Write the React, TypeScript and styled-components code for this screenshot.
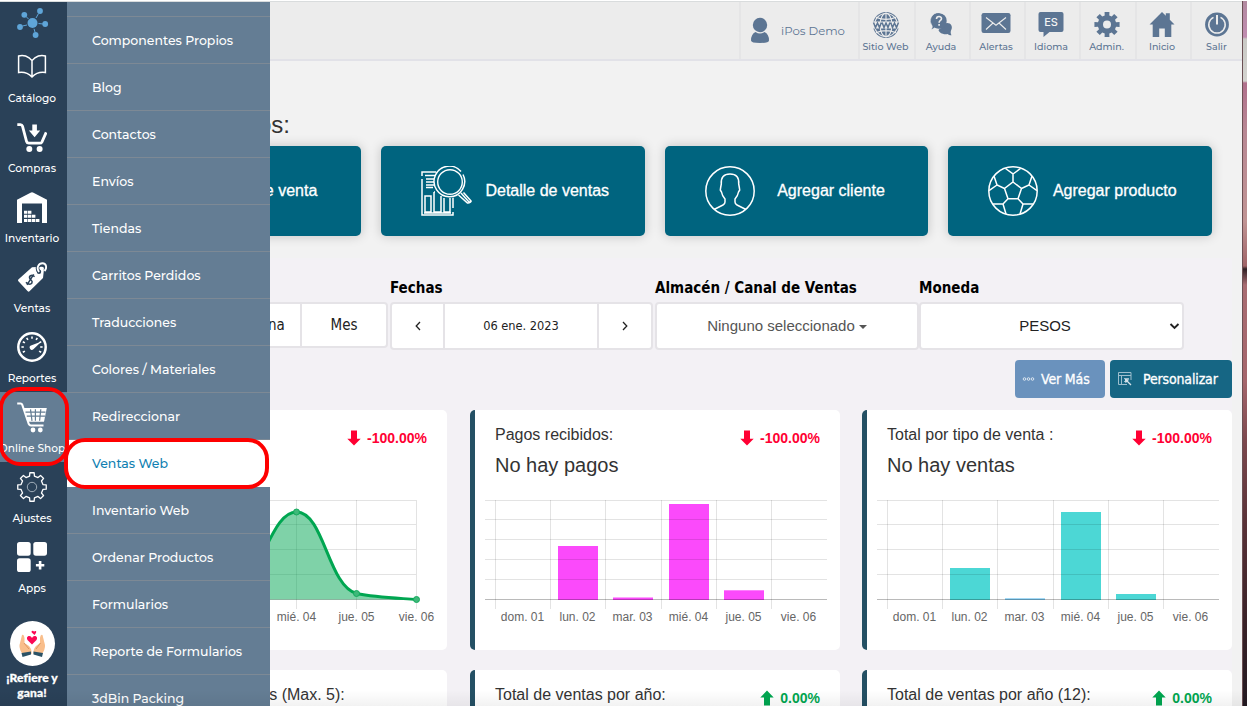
import React from 'react';
import styled, { createGlobalStyle } from 'styled-components';

const geometric = '"Montserrat", "Inter", sans-serif';
const arial = '"Liberation Sans", Arial, sans-serif';
const tahoma = '"DejaVu Sans Condensed", "DejaVu Sans", sans-serif';

const Global = createGlobalStyle`
  * { box-sizing: border-box; }
  body { margin: 0; background: #fff; overflow: hidden; font-family: ${arial}; }
`;

const Screen = styled.div`
  position: relative;
  display: flex;
  width: 1247px;
  height: 706px;
  overflow: hidden;
  border-top: 1px solid #fff;
  &::after {
    content: '';
    position: absolute;
    inset: auto 0 0 0;
    height: 16px;
    background: linear-gradient(rgba(0, 0, 0, 0), rgba(0, 0, 0, 0.05));
  }
`;

const Sidebar = styled.nav`
  width: 67px;
  flex: none;
  display: flex;
  flex-direction: column;
  background: #2a4158;
  border-top: 1px solid #d9dcdd;
`;

const Brand = styled.div`
  height: 40px;
  padding: 5px 0 0 15px;
`;

const SideItem = styled.a<{ $active?: boolean }>`
  height: 70px;
  flex: none;
  padding-top: 10px;
  padding-right: 3px;
  display: flex;
  flex-direction: column;
  align-items: center;
  overflow: hidden;
  background: ${(p) => (p.$active ? '#647d94' : 'transparent')};
`;

const SideLabel = styled.span`
  margin-top: 8px;
  font: 500 10.6px/16px ${geometric};
  color: #fff;
  white-space: nowrap;
`;

const Refer = styled.a`
  margin-top: 19px;
  padding-right: 3px;
  display: flex;
  flex-direction: column;
  align-items: center;
  font: 900 12px/15px Lato, sans-serif;
  letter-spacing: 0.1px;
  -webkit-text-stroke: 0.3px #fff;
  color: #fff;
  text-align: center;
`;

const ReferBadge = styled.span`
  width: 45px;
  height: 45px;
  margin-bottom: 4px;
  border-radius: 50%;
  background: #fff;
  display: flex;
`;

const Submenu = styled.div`
  position: absolute;
  left: 67px;
  top: 1px;
  width: 203px;
  height: 704px;
  overflow: hidden;
  background: #647d94;
`;

const SubmenuStub = styled.div`
  height: 15px;
  border-bottom: 1px solid #7d8995;
`;

const SubmenuItem = styled.a<{ $current?: boolean }>`
  display: block;
  height: 47px;
  padding-left: 25px;
  border-bottom: 1px solid ${(p) => (p.$current ? '#fff' : '#7d8995')};
  font: 500 12.5px/47px ${geometric};
  color: ${(p) => (p.$current ? '#117fb2' : '#fff')};
  background: ${(p) => (p.$current ? '#fff' : 'transparent')};
  white-space: nowrap;
`;

const Marker = styled.div<{ $x: number; $y: number; $w: number; $h: number }>`
  position: absolute;
  left: ${(p) => p.$x}px;
  top: ${(p) => p.$y}px;
  width: ${(p) => p.$w}px;
  height: ${(p) => p.$h}px;
  border: 4px solid #fe0000;
  border-radius: 21px;
`;

const Main = styled.main`
  width: 1175px;
  flex: none;
  display: flex;
  flex-direction: column;
  background: #f2f2f2;
  border-top: 1px solid #d9dcdd;
`;

const Header = styled.header`
  height: 59px;
  flex: none;
  display: flex;
  justify-content: flex-end;
  background: #ececec;
  border-bottom: 2px solid #e2e2e8;
`;

const UserBox = styled.a`
  width: 119px;
  display: flex;
  align-items: center;
  padding-left: 9px;
  border-left: 2px solid #e5e5e6;
  font: 400 11.700px/20px ${geometric};
  color: #5c7593;
`;

const UserName = styled.span`
  margin-left: 11px;
`;

const HeaderItem = styled.a<{ $width: number }>`
  width: ${(p) => p.$width}px;
  display: flex;
  flex-direction: column;
  align-items: center;
  padding-top: 8px;
  padding-right: 3px;
  border-left: 2px solid #e5e5e6;
  font: 500 9.500px/14px ${geometric};
  color: #5c7593;
  white-space: nowrap;
  &:last-child { padding-right: 1px; }
`;

const Title = styled.h3`
  margin: 48px 0 0;
  width: 223px;
  text-align: right;
  font: 400 24px/32px ${arial};
  color: #333;
  white-space: nowrap;
`;

const Actions = styled.section`
  display: grid;
  grid-template-columns: repeat(4, 1fr);
  gap: 20px;
  margin: 5px 30px 0;
`;

const Action = styled.a`
  height: 90px;
  padding-left: 40px;
  display: flex;
  align-items: center;
  border-radius: 5px;
  background: #00647f;
  box-shadow: 0 0 12px rgba(0, 0, 0, 0.2);
  color: #fff;
`;

const ActionLabel = styled.span`
  width: 132px;
  margin-left: 9.500px;
  text-align: center;
  font: 400 16px/20px ${arial};
  -webkit-text-stroke: 0.3px #fff;
  white-space: nowrap;
`;

const Panel = styled.section`
  flex: 1;
  min-height: 0;
  margin: 22px 10px 0 0;
  background: #f3f1f5;
  overflow: hidden;
`;

const Filters = styled.div`
  display: flex;
  padding-left: 58px;
  height: 102px;
`;

const Filter = styled.div<{ $width: number }>`
  width: ${(p) => p.$width}px;
  flex: none;
  padding-top: 19px;
`;

const FilterLabel = styled.label`
  display: block;
  height: 25px;
  font: 700 15px/22px ${tahoma};
  color: #000;
  white-space: nowrap;
`;

const Segments = styled.div<{ $height: number; $width: number }>`
  display: flex;
  width: ${(p) => p.$width}px;
  height: ${(p) => p.$height}px;
  border: 2px solid #e5e3e7;
  border-radius: 4px;
  background: #fff;
  color: #222;
`;

const Segment = styled.span<{ $size: number; $width?: number; $font?: string; $color?: string }>`
  flex: ${(p) => (p.$width ? `0 0 ${p.$width}px` : '1')};
  display: flex;
  align-items: center;
  justify-content: center;
  font: 400 ${(p) => p.$size}px/20px ${(p) => p.$font ?? tahoma};
  color: ${(p) => p.$color ?? '#222'};
  white-space: nowrap;
  & + & { border-left: 2px solid #e5e3e7; }
`;

const Caret = styled.span`
  margin: 2px 0 0 4px;
  border: 4px solid transparent;
  border-top-color: #555;
  border-bottom: 0;
`;

const SelectBox = styled(Segments)`
  position: relative;
  padding-right: 13px;
  svg { position: absolute; right: 2px; top: 18px; }
`;

const Toolbar = styled.div`
  display: flex;
  justify-content: flex-end;
  gap: 5px;
`;

const ToolButton = styled.button<{ $color: string; $width: number }>`
  width: ${(p) => p.$width}px;
  height: 38px;
  padding: 0 0 0 7px;
  display: flex;
  align-items: center;
  border: 0;
  border-radius: 4px;
  background: ${(p) => p.$color};
  color: #fff;
  font: 400 14px/20px ${tahoma};
  letter-spacing: -0.15px;
  -webkit-text-stroke: 0.3px #fff;
`;

const Cards = styled.div`
  display: grid;
  grid-template-columns: repeat(3, 370px);
  grid-auto-rows: 240px;
  column-gap: 22px;
  row-gap: 20px;
  justify-content: end;
  margin-top: 12px;
`;

const Card = styled.article`
  padding: 14px 0 0 20px;
  border-left: 5px solid #245064;
  border-radius: 5px;
  background: #fff;
  color: #333;
  &:nth-child(3n + 1) { margin: 0 1px 0 -1px; }
`;

const CardHead = styled.div`
  display: flex;
  justify-content: space-between;
  height: 25px;
  padding-right: 20px;
`;

const CardTitle = styled.h4`
  margin: 0;
  font: 400 16px/21px ${arial};
  white-space: nowrap;
`;

const CardValue = styled.div`
  height: 30px;
  margin-top: 1px;
  font: 400 20px/30px ${arial};
`;

const Delta = styled.div<{ $up?: boolean }>`
  display: flex;
  align-items: center;
  gap: 6px;
  height: 21px;
  margin-top: 3px;
  font: 700 14px/20px ${arial};
  color: ${(p) => (p.$up ? '#00a650' : '#ff0033')};
`;

const Chart = styled.svg`
  display: block;
  margin: 20px 0 0 -10px;
  text { font: 12px ${arial}; fill: #666; text-anchor: middle; }
`;

const Desktop = styled.aside`
  flex: 1;
  border-left: 1px solid #6b5054;
  background: linear-gradient(
    #b28aa0 0, #c08cb0 36px, #c9c9c5 38px, #d4d4d0 80px, #b0708c 82px, #b88894 130px,
    #c09494 220px, #a06468 265px, #2f2024 268px, #a86c72 284px, #a5666c 380px, #7c484e 440px,
    #5a3238 520px, #3a2228 620px, #241a22 706px
  );
`;

function gear(cx: number, cy: number, outer: number, inner: number, teeth: number, topW: number, baseW: number) {
  const pts: string[] = [];
  for (let i = 0; i < teeth; i++) {
    const a = (i * 2 * Math.PI) / teeth;
    [[-baseW, inner], [-topW, outer], [topW, outer], [baseW, inner]].forEach(([d, r]) => {
      pts.push(`${(cx + r * Math.sin(a + d)).toFixed(2)} ${(cy - r * Math.cos(a + d)).toFixed(2)}`);
    });
  }
  return `M${pts.join('L')}Z`;
}

const Icon30 = ({ children }: { children: React.ReactNode }) => (
  <svg width="30" height="31" viewBox="0 0 30 31" fill="none" stroke="none">{children}</svg>
);

const ticks = Array.from({ length: 9 }, (_, i) => (-120 + i * 30) * (Math.PI / 180));

const sideItems = [
  {
    label: 'Catálogo',
    icon: <path d="M1.6 4C6 2.4 11.500 4 15 8.600C18.500 4 24 2.400 28.400 4V20.600C23.500 19.800 18.500 21.500 15 25C11.500 21.500 6.500 19.800 1.600 20.600ZM15 8.600V25" stroke="#fff" strokeWidth="1.500" />,
  },
  {
    label: 'Compras',
    icon: (
      <>
        <path d="M.3 2.600H3.400Q5 2.600 5.500 4.200L9.600 19.500Q10.100 21.200 11.800 21.200H22.800Q24.300 21.200 25 19.800L29.200 10.300" stroke="#fff" strokeWidth="2.800" />
        <path d="M15.300 2.600H19.900V8.600H23.200L17.600 15.300L11.900 8.600H15.300Z" fill="#fff" />
        <circle cx="12.300" cy="27" r="3" fill="#fff" /><circle cx="22.600" cy="27" r="3" fill="#fff" />
      </>
    ),
  },
  {
    label: 'Inventario',
    icon: (
      <>
        <path d="M0 31V7.800L13.500.7Q15 0 16.500.7L30 7.800V31H25V11.600H5V31Z" fill="#fff" />
        <path d="M7 20.300H15M7 24.300H19M7 28.600H23" stroke="#fff" strokeWidth="3" strokeDasharray="3.400 .6" />
      </>
    ),
  },
  {
    label: 'Ventas',
    icon: (
      <>
        <path d="M1.300 17.500L15 5.200L25 4.700Q27 4.700 27 7L26 16L12.500 29.300Q11.500 30.200 10.500 29.100L1.400 19.200Q.6 18.300 1.300 17.500Z" fill="#fff" />
        <circle cx="22" cy="9.700" r="2.200" fill="#2a4158" />
        <path d="M22 10C18.500 5.500 22 1.200 25.500 1.200C29.500 1.200 30.200 6 28 8.800" stroke="#2a4158" strokeWidth="3.600" />
        <path d="M22 10C18.800 5.500 22 1.200 25.500 1.200C29.500 1.200 30.200 6 27.500 9" stroke="#fff" strokeWidth="1.900" />
        <path d="M17.600 14.600C14.500 11.600 11.500 14.500 13 16.800C14.300 18.800 16 18.500 14.900 21C13.500 23 10.500 22.200 9 20.200M16.700 12.300L10 22.900" stroke="#2a4158" strokeWidth="1.500" />
      </>
    ),
  },
  {
    label: 'Reportes',
    icon: (
      <>
        <circle cx="15" cy="15" r="13.700" stroke="#fff" strokeWidth="2.500" />
        {ticks.map((a) => (
          <path key={a} d={`M${15 + 8.200 * Math.sin(a)} ${15 - 8.200 * Math.cos(a)}L${15 + 10.600 * Math.sin(a)} ${15 - 10.600 * Math.cos(a)}`} stroke="#fff" strokeWidth="1.600" />
        ))}
        <path d="M24.500 9.500L16.400 17.300A2.300 2.300 0 1 1 14 13.400Z" fill="#fff" />
      </>
    ),
  },
  {
    label: 'Online Shop', active: true,
    icon: (
      <>
        <path d="M.2 1.400H3.600Q4.800 1.400 5.200 2.600L11.300 20.800Q12 23.500 14 23.500H26.500" stroke="#fff" strokeWidth="2" />
        <path d="M6.500 6H29.800L27 19.800H11Z" fill="#fff" />
        <path d="M8.500 10.200H28.500M9.800 14.200H28M13.500 7.300L15 18.800M18.400 7.300V18.800M23.800 7.300L22.600 18.800" stroke="#647d94" strokeWidth="1.200" />
        <circle cx="16" cy="28" r="2.400" fill="#fff" /><circle cx="23.300" cy="28" r="2.400" fill="#fff" />
      </>
    ),
  },
  {
    label: 'Ajustes',
    icon: (
      <>
        <path d={gear(15, 15, 14.400, 11.200, 8, 0.150, 0.220)} stroke="#fff" strokeWidth="1.300" strokeLinejoin="round" />
        <circle cx="15" cy="15" r="4.700" stroke="#aeb9c3" strokeWidth=".9" />
      </>
    ),
  },
  {
    label: 'Apps',
    icon: (
      <>
        <rect width="13.700" height="13.700" rx="2.600" fill="#fff" />
        <rect x="16.300" width="13.700" height="13.700" rx="2.600" fill="#fff" />
        <rect y="16.300" width="13.700" height="13.700" rx="2.600" fill="#fff" />
        <path d="M23.100 19V27.400M18.900 23.200H27.300" stroke="#fff" strokeWidth="2.600" />
      </>
    ),
  },
];

const menu = [
  'Componentes Propios', 'Blog', 'Contactos', 'Envíos', 'Tiendas', 'Carritos Perdidos', 'Traducciones',
  'Colores / Materiales', 'Redireccionar', 'Ventas Web', 'Inventario Web', 'Ordenar Productos',
  'Formularios', 'Reporte de Formularios', '3dBin Packing',
];

const HeaderIcon = styled.svg.attrs({ width: 30, height: 30, viewBox: '0 0 30 30', fill: '#5c7593' })`
  flex: none;
`;

const headerItems = [
  {
    label: 'Sitio Web', width: 56,
    icon: (
      <>
        <circle cx="15" cy="15" r="13" />
        <g fill="none" stroke="#ececec" strokeWidth="1.100">
          <ellipse cx="15" cy="15" rx="6" ry="11.800" /><path d="M15 2.500V27.500M5 7.200Q15 11.500 25 7.200M5 22.800Q15 18.500 25 22.800" />
          <circle cx="15" cy="15" r="11.500" />
        </g>
        <rect x="1" y="11.500" width="28" height="7" fill="#ececec" />
        <path d="M2.500 12.500L4.500 17.500L6.500 13L8.500 17.500L10.300 12.500M11.100 12.500L13 17.500L15 13L17 17.500L18.900 12.500M19.700 12.500L21.500 17.500L23.500 13L25.500 17.500L27.500 12.500" fill="none" stroke="#5c7593" strokeWidth="1.500" />
      </>
    ),
  },
  {
    label: 'Ayuda', width: 55,
    icon: (
      <>
        <path d="M18 14C23 11 28 15.500 25 20.500C24.500 22 24.600 23.500 25.500 25.300C23.500 25.200 22.500 24.800 21.500 24C17 25 13 22.500 12.500 20Z" />
        <path d="M13 3A8 7.800 0 1 1 8.500 17.800Q7 19.500 5 19.600Q6.500 18 6.300 15.800A8 7.800 0 0 1 13 3Z" stroke="#ececec" strokeWidth=".6" />
        <path d="M5.500 8Q8 3 13 3.300Q20.500 4 20.700 11Q20.500 18.500 13 18.700Q9.500 18.500 7 16.500Q4.500 12 5.500 8Z" />
        <path d="M10.500 9C10.500 5.500 15.600 5.800 15.500 8.700C15.400 10.400 13.100 10.600 13.100 12.700M13.100 14V15.700" fill="none" stroke="#ececec" strokeWidth="1.600" />
      </>
    ),
  },
  {
    label: 'Alertas', width: 55,
    icon: (
      <>
        <rect x=".5" y="3" width="29" height="20" rx="2.200" />
        <path d="M5 7.500L15 15.200L25 7.500M5 19.500L12 13M25 19.500L18 13" fill="none" stroke="#ececec" strokeWidth="1.100" />
      </>
    ),
  },
  {
    label: 'Idioma', width: 55,
    icon: (
      <>
        <path d="M4.500 2H25.500Q27.500 2 27.500 4V20Q27.500 22 25.500 22H13.500L7.500 27V22H4.500Q2.500 22 2.500 20V4Q2.500 2 4.500 2Z" />
        <text x="15" y="16" textAnchor="middle" fill="#f4f4f4" fontFamily="Inter, sans-serif" fontSize="11" fontWeight="500">ES</text>
      </>
    ),
  },
  {
    label: 'Admin.', width: 56,
    icon: (
      <path fillRule="evenodd" d={`${gear(15, 14.500, 12.800, 9.300, 8, 0.190, 0.250)}M15 10.500A4 4 0 1 0 15 18.500A4 4 0 1 0 15 10.500Z`} />
    ),
  },
  {
    label: 'Inicio', width: 55,
    icon: <path d="M15 2L18.800 5.800V3.300H22.800V9.800L27.500 14.600H24.300V27H17.800V18.500H12.200V27H5.700V14.600H2.500Z" />,
  },
  {
    label: 'Salir', width: 52,
    icon: (
      <>
        <circle cx="15" cy="14.500" r="11.900" />
        <path d="M11.500 7.400A8.200 8.200 0 1 0 18.500 7.400" fill="none" stroke="#ececec" strokeWidth="1.500" />
        <path d="M15 5V14.500" stroke="#ececec" strokeWidth="2" />
      </>
    ),
  },
];

const ActionIcon = styled.svg.attrs({
  width: 51, height: 50, viewBox: '0 0 51 50', fill: 'none', stroke: '#fff', strokeWidth: 1.5,
})`
  flex: none;
`;

const reportIcon = (
  <>
    <path d="M1 10V6H15M1 13V49H32V46M32 42V31M4 9.500H14M5 13H14M5 16H13M5 19H14M5 21.500H12" />
    <path d="M4 30H10V46H4ZM13 26V46H20V30M13 26H14M23 32V46H29V31M3 47H30" />
    <circle cx="29" cy="16" r="15.300" stroke="#00647f" fill="#00647f" />
    <circle cx="29" cy="16" r="12.300" strokeWidth="1.400" />
    <path d="M40 5.500A15.300 15.300 0 1 0 42 8.500M40 27L47.500 35.500Q49.500 37 50 35L42.500 26.500" />
    <path d="M37.500 29L46.500 37Q48.500 37.500 50 35" />
  </>
);
const clientIcon = (
  <>
    <circle cx="25" cy="25" r="24.200" />
    <path d="M9 43.500L18 39Q20 38 20 36V33Q17 29.500 16.500 26L15.300 24Q15.700 21 16.300 18Q15.500 8 25 8Q34.500 8 33.700 18Q34.300 21 34.700 24L33.500 26Q33 29.500 30 33V36Q30 38 32 39L41 43.500" />
  </>
);
const ballIcon = (
  <>
    <circle cx="25" cy="25" r="24.200" />
    <path d="M25 16L33.500 22.500L30 32.700H20L16.500 22.500ZM25 16V8L17.500 2.500M25 8L32.500 2.500M33.500 22.500L41 19L44 10M41 19L49 24.700M16.500 22.500L9 19L6 10M9 19L1 24.700M30 32.700L35 38H45M35 38L32 48M20 32.700L15 38H5M15 38L18 48" />
  </>
);

const Arrow = ({ up }: { up?: boolean }) => (
  <svg width="14" height="16" viewBox="0 0 14 16" fill="currentColor">
    <path d={up ? 'M7 .5L13.700 7.500H10V15.500H4V7.500H.3Z' : 'M7 15.500L.3 8.800H4V.5H10V8.800H13.700Z'} />
  </svg>
);

const days = ['dom. 01', 'lun. 02', 'mar. 03', 'mié. 04', 'jue. 05', 'vie. 06'];

type Bar = [slot: number, top: number, color?: string];

function BarChart({ rows, bars, color }: { rows: number[]; bars: Bar[]; color: string }) {
  const cols = [10.5, 65.5, 120.5, 176.5, 231.5, 286.5];
  return (
    <Chart width="355" height="130" viewBox="0 0 355 130">
      {bars.map(([slot, top, c]) => (
        <rect key={slot} x={cols[slot] + 7.5} y={top} width="40" height={100 - top} fill={c ?? color} />
      ))}
      <g stroke="#000" strokeOpacity=".11">
        {rows.map((y) => <path key={y} d={`M0 ${y}H342`} />)}
        {cols.map((x) => <path key={x} d={`M${x} 0V109`} />)}
      </g>
      <path d="M0 99.500H342" stroke="#000" strokeOpacity=".27" />
      {days.map((d, i) => <text key={d} x={cols[i] + 27} y="121">{d}</text>)}
    </Chart>
  );
}

function LineChart() {
  const xs = [24.5, 84.5, 144.5, 204.5, 264.5, 324.5];
  const curve = 'M144.500 90C172 70 180 12 204.500 12C232 12 236 86 264.500 93.500C284 97.500 304 98 324.500 99.500';
  return (
    <Chart width="355" height="130" viewBox="0 0 355 130">
      <g stroke="#000" strokeOpacity=".11">
        {[0.5, 24.5, 49.5, 74.5].map((y) => <path key={y} d={`M0 ${y}H324`} />)}
        {xs.map((x) => <path key={x} d={`M${x} 0V109`} />)}
      </g>
      <path d="M0 99.500H324" stroke="#000" strokeOpacity=".27" />
      <path d={`${curve}L144.500 99.500Z`} fill="#00a651" fillOpacity=".5" />
      <path d={curve} fill="none" stroke="#00a651" strokeWidth="3" />
      {[[204.5, 12], [264.5, 93.5], [324.5, 99.5]].map(([x, y]) => (
        <circle key={x} cx={x} cy={y} r="3" fill="#3fb87a" stroke="#14ab5d" />
      ))}
      {xs.slice(3).map((x, i) => <text key={x} x={x} y="121">{days[i + 3]}</text>)}
    </Chart>
  );
}

function StatCard({ title, value, delta, up, children }: {
  title: string; value?: string; delta?: string; up?: boolean; children?: React.ReactNode;
}) {
  return (
    <Card>
      <CardHead>
        <CardTitle>{title}</CardTitle>
        {delta && <Delta $up={up}><Arrow up={up} />{delta}</Delta>}
      </CardHead>
      <CardValue>{value}</CardValue>
      {children}
    </Card>
  );
}

export default function App() {
  return (
    <Screen>
      <Global />
      <Sidebar>
        <Brand>
          <svg width="34" height="32" viewBox="15 7 34 32" fill="#5fa5d8" stroke="#5fa5d8">
            <g stroke="none">
              <circle cx="32.500" cy="23" r="5" /><circle cx="24.300" cy="14.800" r="2.900" /><circle cx="40" cy="11" r="2.900" />
              <circle cx="45.200" cy="24" r="2.900" /><circle cx="35.600" cy="35" r="2.900" /><circle cx="20" cy="27" r="2.900" />
            </g>
            <path d="M26 16.500L28.500 19M38.500 13.500L36 18M43 24L38.500 23.500M35 32L34 28.800M22.500 26L27 25" />
          </svg>
        </Brand>
        {sideItems.map((s) => (
          <SideItem key={s.label} $active={s.active}>
            <Icon30>{s.icon}</Icon30>
            <SideLabel>{s.label}</SideLabel>
          </SideItem>
        ))}
        <Refer>
          <ReferBadge>
            <svg width="45" height="45" viewBox="0 0 45 45">
              <path d="M12 14Q14 13 14.500 17V22L19 25Q22 28 21.500 33L13 34Q9 28 9.500 24Z" fill="#f9be8b" />
              <path d="M32.500 14Q30.500 13 30 17V22L26 25Q23 28 23.500 33L31.500 34Q35.500 28 35 24Z" fill="#f9be8b" />
              <path d="M14 22L19 28M30.500 22L26 28" stroke="#df9560" strokeWidth="1" />
              <path d="M11.500 32L21 30.500V33.500L12.500 36ZM33 32L23.500 30.500V33.500L32 36Z" fill="#2b5367" />
              <path d="M22 23.500L17.500 19Q16 16 18.500 15Q21 14.500 22 17Q23 14.500 25.500 15Q28 16 26.500 19ZM24.500 14L21.700 11.500Q21 10 22.500 9.800Q23.800 9.800 24 10.800Q25 9.300 26.200 10.300Q26.800 11.500 24.500 14Z" fill="#fb0754" />
            </svg>
          </ReferBadge>
          <span>¡Refiere y<br />gana!</span>
        </Refer>
      </Sidebar>

      <Main>
        <Header>
          <UserBox>
            <svg width="20" height="28" viewBox="0 0 20 28" fill="#5c7593">
              <circle cx="10" cy="8" r="7.200" />
              <path d="M5.500 15Q10 18 14.500 15Q19 17 19 23.500Q19 26 10 26Q1 26 1 23.500Q1 17 5.500 15Z" />
            </svg>
            <UserName>iPos Demo</UserName>
          </UserBox>
          {headerItems.map((h) => (
            <HeaderItem key={h.label} $width={h.width}>
              <HeaderIcon>{h.icon}</HeaderIcon>
              {h.label}
            </HeaderItem>
          ))}
        </Header>

        <Title>Accesos:</Title>
        <Actions>
          <Action><ActionIcon /><ActionLabel>Punto de venta</ActionLabel></Action>
          <Action><ActionIcon>{reportIcon}</ActionIcon><ActionLabel>Detalle de ventas</ActionLabel></Action>
          <Action><ActionIcon>{clientIcon}</ActionIcon><ActionLabel>Agregar cliente</ActionLabel></Action>
          <Action><ActionIcon>{ballIcon}</ActionIcon><ActionLabel>Agregar producto</ActionLabel></Action>
        </Actions>

        <Panel>
          <Filters>
            <Filter $width={265}>
              <FilterLabel />
              <Segments $width={263} $height={46}>
                <Segment $size={15} />
                <Segment $size={15}>Semana</Segment>
                <Segment $size={15} $width={86}>Mes</Segment>
              </Segments>
            </Filter>
            <Filter $width={265}>
              <FilterLabel>Fechas</FilterLabel>
              <Segments $width={263} $height={48}>
                <Segment $size={13} $width={51}>
                  <svg width="6" height="10" fill="none" stroke="#222" strokeWidth="1.300"><path d="M5 1L1.200 5L5 9" /></svg>
                </Segment>
                <Segment $size={12.7}>06 ene. 2023</Segment>
                <Segment $size={13} $width={54}>
                  <svg width="6" height="10" fill="none" stroke="#222" strokeWidth="1.300"><path d="M1 1L4.800 5L1 9" /></svg>
                </Segment>
              </Segments>
            </Filter>
            <Filter $width={264}>
              <FilterLabel>Almacén / Canal de Ventas</FilterLabel>
              <Segments $width={264} $height={48}>
                <Segment $size={15} $font={arial} $color="#555">Ninguno seleccionado<Caret /></Segment>
              </Segments>
            </Filter>
            <Filter $width={266}>
              <FilterLabel>Moneda</FilterLabel>
              <SelectBox $width={265} $height={48}>
                <Segment $size={15} $font={arial}>PESOS</Segment>
                <svg width="11" height="9" fill="none" stroke="#222" strokeWidth="1.900"><path d="M1.500 2L5.500 6L9.500 2" /></svg>
              </SelectBox>
            </Filter>
          </Filters>
          <Toolbar>
            <ToolButton $color="#6a92bd" $width={90}>
              <svg width="19" height="6" fill="none" stroke="#dce6f0"><circle cx="2.500" cy="3" r="1.300" /><circle cx="6.500" cy="3" r="1.300" /><circle cx="10.500" cy="3" r="1.300" /></svg>
              Ver Más
            </ToolButton>
            <ToolButton $color="#166684" $width={122}>
              <svg width="26" height="16" fill="none" stroke="#9dbecd"><path d="M14 9V1.500H1.500V13.500H10M1 4.500H14M4.500 5V13M7 7.500H12M7 10.500H9" /><path d="M8.500 8.500L14 14M8.500 8.500L9 11L11 9Z" stroke="#d5e3ea" strokeWidth="1.300" /></svg>
              Personalizar
            </ToolButton>
          </Toolbar>
          <Cards>
            <StatCard title="Ventas:" delta="-100.00%"><LineChart /></StatCard>
            <StatCard title="Pagos recibidos:" value="No hay pagos" delta="-100.00%">
              <BarChart color="#fb4afb" rows={[0.5, 19.5, 39.5, 59.5, 79.5]} bars={[[1, 46], [2, 97.5], [3, 4], [4, 90.3]]} />
            </StatCard>
            <StatCard title="Total por tipo de venta :" value="No hay ventas" delta="-100.00%">
              <BarChart color="#4cd7d5" rows={[0.5, 24.5, 49.5, 74.5]} bars={[[1, 68], [2, 98.3, '#7ecbf3'], [3, 12], [4, 94]]} />
            </StatCard>
            <StatCard title="Productos más vendidos (Max. 5):" />
            <StatCard title="Total de ventas por año:" delta="0.00%" up />
            <StatCard title="Total de ventas por año (12):" delta="0.00%" up />
          </Cards>
        </Panel>
      </Main>
      <Desktop />

      <Submenu>
        <SubmenuStub />
        {menu.map((label) => (
          <SubmenuItem key={label} $current={label === 'Ventas Web'}>{label}</SubmenuItem>
        ))}
      </Submenu>
      <Marker $x={-1} $y={386} $w={70} $h={79} />
      <Marker $x={64} $y={437} $w={205} $h={51} />
    </Screen>
  );
}
